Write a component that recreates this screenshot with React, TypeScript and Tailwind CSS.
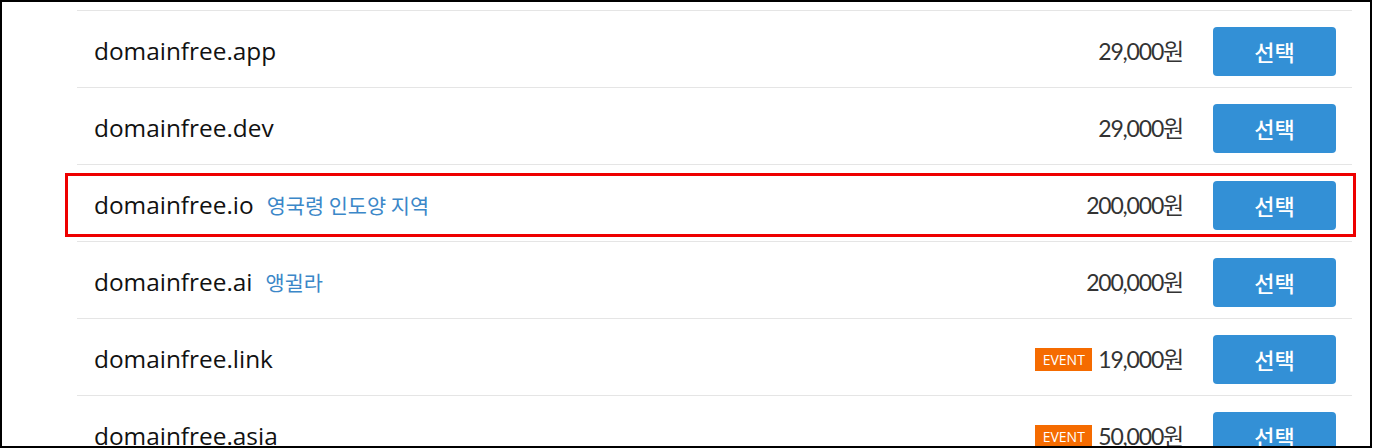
const rows: { name: string; note?: string; price: string; event?: boolean }[] = [
  { name: 'domainfree.app', price: '29,000원' },
  { name: 'domainfree.dev', price: '29,000원' },
  { name: 'domainfree.io', note: '영국령 인도양 지역', price: '200,000원' },
  { name: 'domainfree.ai', note: '앵귈라', price: '200,000원' },
  { name: 'domainfree.link', price: '19,000원', event: true },
  { name: 'domainfree.asia', price: '50,000원', event: true },
];

export default function App() {
  return (
    <div className="relative w-[1372px] h-[448px] overflow-hidden border-2 border-black bg-white">
      <div className="pt-[8px] pl-[75px] pr-[18px]">
        {rows.map((r) => (
          <div
            key={r.name}
            className="flex items-center border-t border-[#e5e5e5] pt-[16px] pb-[11px] pl-[17px] pr-[16px]"
          >
            <div className="flex flex-1 items-center">
              <span className="text-[24.4px] text-[#111] font-['Open_Sans','Noto_Sans_CJK_KR',sans-serif]">
                {r.name}
              </span>
              {r.note && (
                <span className="ml-[13px] text-[20.8px] text-[#3b87c8] font-['Noto_Sans_CJK_KR',sans-serif]">
                  {r.note}
                </span>
              )}
            </div>
            <div className="flex items-center">
              {r.event && (
                <span className="mr-[6px] flex h-[23px] w-[57px] items-center justify-center bg-[#f56b00] text-[14px] text-white font-['Open_Sans',sans-serif]">
                  EVENT
                </span>
              )}
              <span className="text-[23px] tracking-[-1.2px] text-[#333] font-['Lato','Noto_Sans_CJK_KR',sans-serif]">
                {r.price}
              </span>
            </div>
            <button className="ml-[30px] h-[49px] w-[123px] rounded-[4px] bg-[#3390d6] text-[22px] font-medium text-white font-['Noto_Sans_CJK_KR',sans-serif]">
              선택
            </button>
          </div>
        ))}
      </div>
      <div className="pointer-events-none absolute left-[63px] top-[171px] h-[64px] w-[1291px] border-[3px] border-[#ee0000]" />
    </div>
  );
}
